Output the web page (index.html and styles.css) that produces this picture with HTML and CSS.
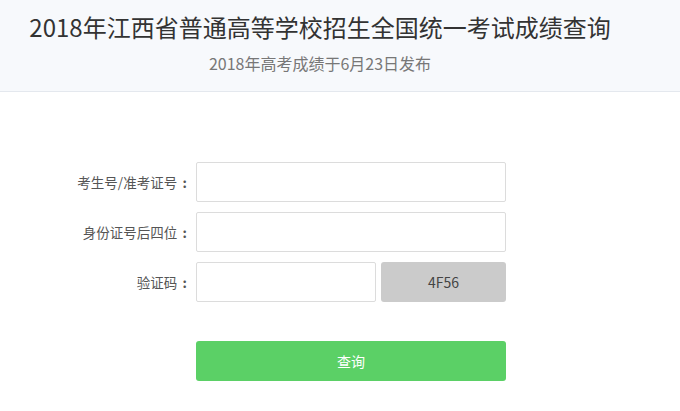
FILE: index.html
```html
<!DOCTYPE html>
<html lang="zh-CN">
<head>
<meta charset="utf-8">
<title>2018年江西省普通高等学校招生全国统一考试成绩查询</title>
<link rel="stylesheet" href="styles.css">
</head>
<body>
<header class="header">
  <h1 class="title">2018年江西省普通高等学校招生全国统一考试成绩查询</h1>
  <p class="subtitle">2018年高考成绩于6月23日发布</p>
</header>
<main class="form">
  <div class="row">
    <label class="label">考生号/准考证号<span class="colon">:</span></label>
    <input class="input" type="text">
  </div>
  <div class="row">
    <label class="label">身份证号后四位<span class="colon">:</span></label>
    <input class="input" type="text">
  </div>
  <div class="row">
    <label class="label">验证码<span class="colon">:</span></label>
    <div class="captcha-group">
      <input class="input input-short" type="text">
      <div class="captcha">4F56</div>
    </div>
  </div>
  <div class="row row-submit">
    <span class="label"></span>
    <button class="btn" type="button">查询</button>
  </div>
</main>
</body>
</html>
```
FILE: styles.css
```css
* { box-sizing: border-box; }
html, body {
  margin: 0;
  padding: 0;
  background: #fff;
  font-family: "Noto Sans CJK SC", "Noto Sans", sans-serif;
  color: #333;
}
.header {
  height: 92px;
  background: #f7f9fc;
  border-bottom: 1px solid #e4e8ee;
  padding-right: 40px;
  text-align: center;
  padding-top: 10px;
}
.title {
  margin: 0;
  font-size: 24px;
  font-weight: normal;
  line-height: 34px;
  color: #333;
}
.subtitle {
  margin: 8px 0 0;
  font-size: 16px;
  line-height: 22px;
  color: #777;
}
.form {
  padding-top: 70px;
  display: flex;
  flex-direction: column;
  gap: 10px;
}
.row {
  display: grid;
  grid-template-columns: 192px 310px;
  column-gap: 4px;
  align-items: center;
  height: 40px;
}
.row-submit {
  margin-top: 29px;
}
.label {
  text-align: right;
  font-size: 13.5px;
  color: #555;
}
.colon {
  display: inline-block;
  width: 1.1em;
  text-align: center;
  font-weight: bold;
}
.input {
  width: 310px;
  height: 40px;
  border: 1px solid #dcdcdc;
  border-radius: 2px;
  background: #fff;
  outline: none;
  margin: 0;
}
.captcha-group {
  display: flex;
  gap: 5px;
}
.input-short {
  width: 180px;
}
.captcha {
  width: 125px;
  height: 40px;
  background: #cbcbcb;
  border-radius: 3px;
  display: flex;
  align-items: center;
  justify-content: center;
  font-size: 14px;
  color: #444;
}
.btn {
  width: 310px;
  height: 40px;
  border: none;
  border-radius: 3px;
  background: #5bd066;
  color: #fff;
  font-family: "Noto Sans CJK SC", sans-serif;
  font-size: 14px;
  padding: 0;
}
```
